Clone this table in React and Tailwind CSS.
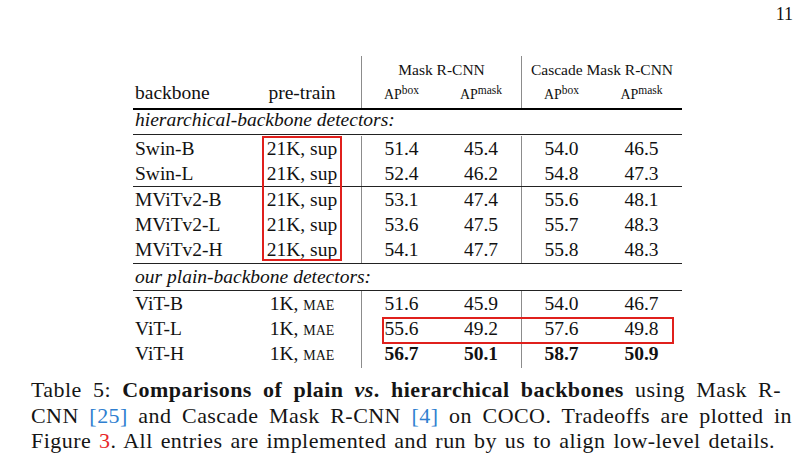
const serif = "font-['Liberation_Serif','Times_New_Roman',serif]";
const cols = "grid grid-cols-[110px_118px_80px_80px_80px_81px]";
const vline = "border-l border-[#8c8c8c]";

const hier = [
  { name: "Swin-B", vals: ["51.4", "45.4", "54.0", "46.5"], h: "h-[26px] pt-[1px]" },
  { name: "Swin-L", vals: ["52.4", "46.2", "54.8", "47.3"], h: "h-[25px]", rule: true },
  { name: "MViTv2-B", vals: ["53.1", "47.4", "55.6", "48.1"], h: "h-[25px]" },
  { name: "MViTv2-L", vals: ["53.6", "47.5", "55.7", "48.3"], h: "h-[25px]" },
  { name: "MViTv2-H", vals: ["54.1", "47.7", "55.8", "48.3"], h: "h-[26px]" },
];

const plain = [
  { name: "ViT-B", vals: ["51.6", "45.9", "54.0", "46.7"], h: "h-[25px]" },
  { name: "ViT-L", vals: ["55.6", "49.2", "57.6", "49.8"], h: "h-[25px]" },
  { name: "ViT-H", vals: ["56.7", "50.1", "58.7", "50.9"], h: "h-[27px]", bold: true },
];

function Ap({ sup }) {
  return (
    <span>
      <span className="text-[14px]">AP</span>
      <span className="text-[11.5px] relative top-[-5px]">{sup}</span>
    </span>
  );
}

function Row({ r, pre }) {
  const num = r.bold ? "font-bold" : "";
  return (
    <div className={`${cols} ${r.h} leading-[25px] text-[19.5px]`}>
      <div className="pl-[2px]">{r.name}</div>
      <div className="text-center">{pre}</div>
      <div className={`text-center ${vline} ${num}`}>{r.vals[0]}</div>
      <div className={`text-center ${num}`}>{r.vals[1]}</div>
      <div className={`text-center ${vline} ${num}`}>{r.vals[2]}</div>
      <div className={`text-center ${num}`}>{r.vals[3]}</div>
    </div>
  );
}

const mae = (
  <span>
    1K, <span className="[font-variant-caps:small-caps]">mae</span>
  </span>
);

export default function App() {
  return (
    <div className={`w-[800px] h-[469px] bg-white relative overflow-hidden text-[#111] ${serif}`}>
      <div className="h-[56px] pt-[5px] pr-[7px] text-right text-[18px] leading-[18px]">11</div>

      <div className="ml-[133px] w-[549px]">
        <div className={`${cols} h-[24px] leading-[27px] text-[15.5px]`}>
          <div className="col-span-2" />
          <div className={`col-span-2 text-center ${vline}`}>Mask R-CNN</div>
          <div className={`col-span-2 text-center ${vline}`}>Cascade Mask R-CNN</div>
        </div>
        <div className={`${cols} h-[28px] leading-[25px] text-[19.5px]`}>
          <div className="pl-[2px]">backbone</div>
          <div className="text-center">pre-train</div>
          <div className={`text-center ${vline}`}><Ap sup="box" /></div>
          <div className="text-center"><Ap sup="mask" /></div>
          <div className={`text-center ${vline}`}><Ap sup="box" /></div>
          <div className="text-center"><Ap sup="mask" /></div>
        </div>
        <div className="h-[2px] bg-black" />
        <div className="h-[24px] leading-[19px] text-[19.5px] italic pl-[2px]">hierarchical-backbone detectors:</div>
        <div className="h-px bg-[#222]" />
        {hier.map((r) => (
          <div key={r.name}>
            <Row r={r} pre="21K, sup" />
            {r.rule && <div className="h-px bg-[#222]" />}
          </div>
        ))}
        <div className="h-px bg-[#222]" />
        <div className="h-[26px] leading-[25px] text-[19.5px] italic pl-[2px]">our plain-backbone detectors:</div>
        <div className="h-px bg-[#222]" />
        {plain.map((r) => (
          <Row key={r.name} r={r} pre={mae} />
        ))}
      </div>

      <div className="absolute left-[262px] top-[136px] w-[80px] h-[125px] border-2 border-[#e0201c]" />
      <div className="absolute left-[382px] top-[317px] w-[292px] h-[27px] border-2 border-[#e0201c]" />

      <div className="mt-[9px] ml-[31px] w-[761px] text-[22px] leading-[25.5px] tracking-[0.45px] [word-spacing:2px] text-[#151515]">
        <div className="mr-[11px] text-justify [text-align-last:justify]">
          Table 5: <b>Comparisons of plain <i>vs</i>. hierarchical backbones</b> using Mask R-
        </div>
        <div className="text-justify [text-align-last:justify]">
          CNN <span className="text-[#2f7fd0]">[25]</span> and Cascade Mask R-CNN{" "}
          <span className="text-[#2f7fd0]">[4]</span> on COCO. Tradeoffs are plotted in
        </div>
        <div>
          Figure <span className="text-[#e8282a]">3</span>. All entries are implemented and run by us to align low-level details.
        </div>
      </div>
    </div>
  );
}
